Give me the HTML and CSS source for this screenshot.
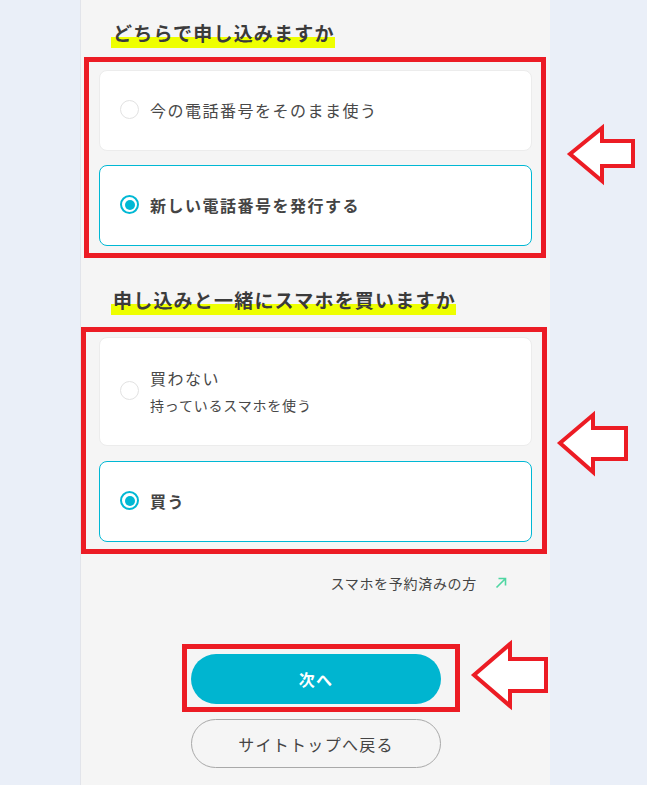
FILE: index.html
```html
<!DOCTYPE html>
<html lang="ja">
<head>
<meta charset="utf-8">
<title>申し込み</title>
<link rel="stylesheet" href="styles.css">
</head>
<body>
<main class="panel">
  <h2 class="heading heading--first"><span class="marker">どちらで申し込みますか</span></h2>
  <div class="redbox redbox--one">
    <label class="card">
      <span class="radio"></span>
      <span class="card-text">今の電話番号をそのまま使う</span>
    </label>
    <label class="card card--selected">
      <span class="radio radio--on"></span>
      <span class="card-text card-text--bold">新しい電話番号を発行する</span>
    </label>
  </div>

  <h2 class="heading heading--second"><span class="marker">申し込みと一緒にスマホを買いますか</span></h2>
  <div class="redbox redbox--two">
    <label class="card card--tall">
      <span class="radio"></span>
      <span class="card-lines">
        <span class="card-text">買わない</span>
        <span class="card-sub">持っているスマホを使う</span>
      </span>
    </label>
    <label class="card card--selected">
      <span class="radio radio--on"></span>
      <span class="card-text card-text--bold">買う</span>
    </label>
  </div>

  <div class="reserved">
    <a class="reserved-link" href="#">スマホを予約済みの方</a>
    <svg class="reserved-icon" width="12" height="12" viewBox="0 0 12 12" aria-hidden="true">
      <path d="M1.5 10.5 L10.5 1.5 M3.5 1.5 H10.5 V8.5" fill="none" stroke="#4fd6a2" stroke-width="1.6"/>
    </svg>
  </div>

  <div class="redbox redbox--three">
    <button class="btn btn--primary" type="button">次へ</button>
  </div>
  <div class="back-row">
    <button class="btn btn--outline" type="button">サイトトップへ戻る</button>
  </div>
</main>

<svg class="annotations" width="647" height="785" viewBox="0 0 647 785" aria-hidden="true">
  <polygon points="570,154 602,128 602,141 633,141 633,166 602,166 602,181" />
  <polygon points="560,443 593,415 593,428 626,428 626,459 593,459 593,472" />
  <polygon points="474,675 510,644 510,659 546,659 546,691 510,691 510,706" />
</svg>
</body>
</html>
```

FILE: styles.css
```css
* {
  box-sizing: border-box;
}

html, body {
  margin: 0;
  padding: 0;
}

body {
  position: relative;
  width: 647px;
  height: 785px;
  overflow: hidden;
  background: #eaeff8;
  font-family: "Noto Sans CJK JP", "Noto Sans", sans-serif;
  color: #444;
}

.panel {
  margin-left: 80px;
  width: 470px;
  min-height: 785px;
  background: #f5f5f5;
  border-left: 1px solid #e2e4ea;
  padding-bottom: 16px;
}

.heading {
  display: flex;
  margin: 0;
  padding-left: 30px;
  font-size: 19px;
  font-weight: 700;
  letter-spacing: 1.2px;
  color: #3b3b3b;
}

.heading--first {
  padding-top: 21px;
}

.heading--second {
  margin-top: 30px;
}

.marker {
  display: block;
  line-height: 24px;
  padding: 0 0 3px 2px;
  background: linear-gradient(to bottom, transparent 16px, #eeff00 16px);
}

.redbox {
  border: 5px solid #ec1c24;
}

.redbox--one {
  margin: 9px 0 0 3px;
  width: 462px;
  padding: 8px 9px 7px 10px;
}

.redbox--two {
  margin: 12px 0 0 0;
  width: 466px;
  padding: 5px 10px 7px 13px;
}

.redbox--three {
  margin: 51px 0 0 101px;
  width: 278px;
  padding: 5px 13px 3px 4px;
}

.redbox--one .card + .card {
  margin-top: 14px;
}

.redbox--two .card + .card {
  margin-top: 15px;
}

.card {
  display: flex;
  align-items: center;
  gap: 11px;
  width: 433px;
  min-height: 81px;
  padding: 0 20px 2px;
  background: #fff;
  border: 1px solid #ececec;
  border-radius: 8px;
}

.card--tall {
  min-height: 109px;
}

.card--selected {
  border-color: #00b8d4;
}

.radio {
  flex: none;
  width: 19px;
  height: 19px;
  border-radius: 50%;
  border: 1px solid #e2e2e2;
  background: #fff;
}

.radio--on {
  border: 2px solid #00b8d4;
  display: flex;
  align-items: center;
  justify-content: center;
}

.radio--on::after {
  content: "";
  width: 10px;
  height: 10px;
  border-radius: 50%;
  background: #00b8d4;
}

.card-lines {
  display: flex;
  flex-direction: column;
}

.card-text {
  font-size: 16px;
  line-height: 24px;
  letter-spacing: 1.5px;
  color: #484848;
}

.card-text--bold {
  font-weight: 700;
  color: #444;
}

.card-sub {
  margin-top: 4px;
  font-size: 14px;
  line-height: 22px;
  letter-spacing: 0.8px;
  color: #484848;
}

.reserved {
  display: flex;
  justify-content: flex-end;
  align-items: center;
  gap: 18px;
  margin-top: 19px;
  padding-right: 43px;
  height: 20px;
}

.reserved-link {
  font-size: 14px;
  line-height: 20px;
  letter-spacing: 0.7px;
  color: #444;
  text-decoration: none;
}

.reserved-icon {
  display: block;
}

.btn {
  display: block;
  width: 250px;
  height: 50px;
  border-radius: 25px;
  font-family: "Noto Sans CJK JP", "Noto Sans", sans-serif;
  font-size: 16px;
  letter-spacing: 1.3px;
  cursor: pointer;
}

.btn--primary {
  border: none;
  background: #00b5d0;
  color: #fff;
  font-weight: 700;
}

.back-row {
  margin-top: 7px;
  padding-left: 110px;
}

.btn--outline {
  background: transparent;
  border: 1px solid #a9a9a9;
  color: #444;
  height: 49px;
}

.annotations {
  position: absolute;
  top: 0;
  left: 0;
  pointer-events: none;
}

.annotations polygon {
  fill: #fff;
  stroke: #ec1c24;
  stroke-width: 4;
  stroke-linejoin: miter;
}
```
